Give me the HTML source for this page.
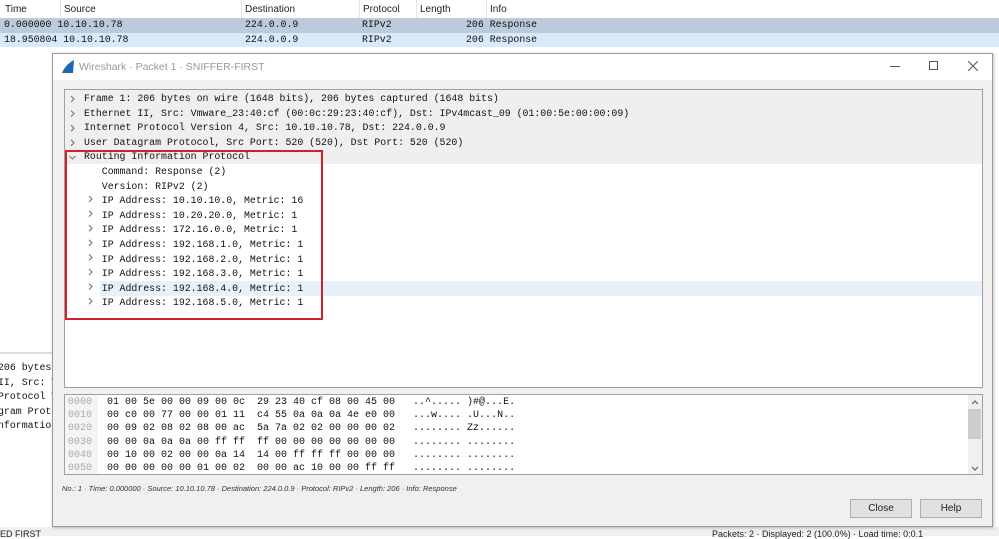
<!DOCTYPE html>
<html><head><style>
*{margin:0;padding:0;box-sizing:border-box}
body{width:999px;height:536px;overflow:hidden;background:#fff;position:relative;font-family:"Liberation Sans",sans-serif}
.a{position:absolute;white-space:pre}
.m{font-family:"Liberation Mono",monospace;font-size:9.9px;color:#111}
.s{font-size:10px;color:#222}
</style></head><body>
<div class="a" style="left:0;top:0;width:999px;height:18px;background:#fff"></div>
<div class="a s" style="left:5px;top:4px">Time</div>
<div class="a" style="left:60px;top:0;width:1px;height:18px;background:#e5e5e5"></div>
<div class="a s" style="left:64px;top:4px">Source</div>
<div class="a" style="left:241px;top:0;width:1px;height:18px;background:#e5e5e5"></div>
<div class="a s" style="left:245px;top:4px">Destination</div>
<div class="a" style="left:359px;top:0;width:1px;height:18px;background:#e5e5e5"></div>
<div class="a s" style="left:363px;top:4px">Protocol</div>
<div class="a" style="left:416px;top:0;width:1px;height:18px;background:#e5e5e5"></div>
<div class="a s" style="left:420px;top:4px">Length</div>
<div class="a" style="left:486px;top:0;width:1px;height:18px;background:#e5e5e5"></div>
<div class="a s" style="left:490px;top:4px">Info</div>
<div class="a" style="left:0;top:18px;width:999px;height:15px;background:#bccbdb"></div>
<div class="a" style="left:0;top:33px;width:999px;height:14px;background:#d8eaf9"></div>
<div class="a m" style="left:4px;top:19px">0.000000 10.10.10.78</div>
<div class="a m" style="left:245px;top:19px">224.0.0.9</div>
<div class="a m" style="left:362px;top:19px">RIPv2</div>
<div class="a m" style="left:466px;top:19px">206 Response</div>
<div class="a m" style="left:4px;top:34px">18.950804 10.10.10.78</div>
<div class="a m" style="left:245px;top:34px">224.0.0.9</div>
<div class="a m" style="left:362px;top:34px">RIPv2</div>
<div class="a m" style="left:466px;top:34px">206 Response</div>
<div class="a" style="left:0;top:352px;width:53px;height:2px;background:#ddd"></div>
<div class="a m" style="left:-2px;top:361px;line-height:14.6px">206 bytes
II, Src: V
Protocol V
gram Proto
nformation</div>
<div class="a" style="left:0;top:527px;width:999px;height:9px;background:#f0f0f0"></div>
<div class="a s" style="left:0;top:529px;font-size:9px">ED FIRST</div>
<div class="a s" style="left:712px;top:529px;font-size:9px">Packets: 2 · Displayed: 2 (100.0%) · Load time: 0:0.1</div>
<div class="a" style="left:52px;top:53px;width:941px;height:474px;background:#f0f0f0;border:1px solid #9a9a9a;box-shadow:1px 1px 3px rgba(0,0,0,.25)"></div>
<div class="a" style="left:53px;top:54px;width:939px;height:26px;background:#fff"></div>
<svg class="a" style="left:61px;top:60px" width="14" height="13"><path d="M1 13 C3 8 7 3 13 0 L12 13 Z" fill="#1f67b5"/></svg>
<div class="a" style="left:79px;top:61px;font-size:10.5px;color:#999">Wireshark · Packet 1 · SNIFFER-FIRST</div>
<div class="a" style="left:890px;top:66px;width:10px;height:1px;background:#555"></div>
<div class="a" style="left:929px;top:61px;width:9px;height:9px;border:1px solid #555"></div>
<svg class="a" style="left:968px;top:61px" width="10" height="10"><path d="M0 0L10 10M10 0L0 10" stroke="#555" stroke-width="1"/></svg>
<div class="a" style="left:64px;top:89px;width:919px;height:299px;background:#fff;border:1px solid #a0a0a0"></div>
<div class="a" style="left:65px;top:90px;width:917px;height:74px;background:#efefef"></div>
<div class="a" style="left:100px;top:281px;width:882px;height:15px;background:#e6f1fb"></div>
<div class="a m" style="left:84px;top:92px;line-height:14.6px">Frame 1: 206 bytes on wire (1648 bits), 206 bytes captured (1648 bits)
Ethernet II, Src: Vmware_23:40:cf (00:0c:29:23:40:cf), Dst: IPv4mcast_09 (01:00:5e:00:00:09)
Internet Protocol Version 4, Src: 10.10.10.78, Dst: 224.0.0.9
User Datagram Protocol, Src Port: 520 (520), Dst Port: 520 (520)
Routing Information Protocol
   Command: Response (2)
   Version: RIPv2 (2)
   IP Address: 10.10.10.0, Metric: 16
   IP Address: 10.20.20.0, Metric: 1
   IP Address: 172.16.0.0, Metric: 1
   IP Address: 192.168.1.0, Metric: 1
   IP Address: 192.168.2.0, Metric: 1
   IP Address: 192.168.3.0, Metric: 1
   IP Address: 192.168.4.0, Metric: 1
   IP Address: 192.168.5.0, Metric: 1</div>
<svg class="a" style="left:68px;top:94px" width="10" height="70"><path d="M3 2L6 5L3 8M3 16.6L6 19.6L3 22.6M3 31.2L6 34.2L3 37.2M3 45.8L6 48.8L3 51.8M1.5 62L4.5 65L7.5 62" fill="none" stroke="#777" stroke-width="1.1"/></svg>
<svg class="a" style="left:86px;top:196px" width="10" height="112"><path d="M3 0L6 3L3 6M3 14.6L6 17.6L3 20.6M3 29.2L6 32.2L3 35.2M3 43.8L6 46.8L3 49.8M3 58.4L6 61.4L3 64.4M3 73L6 76L3 79M3 87.6L6 90.6L3 93.6M3 102.2L6 105.2L3 108.2" fill="none" stroke="#777" stroke-width="1.1"/></svg>
<div class="a" style="left:65px;top:150px;width:258px;height:170px;border:2px solid #d0202a"></div>
<div class="a" style="left:64px;top:394px;width:919px;height:81px;background:#fff;border:1px solid #a0a0a0"></div>
<div class="a" style="left:65px;top:395px;width:33px;height:79px;background:#f4f4f4"></div>
<div class="a m" style="left:68px;top:396px;line-height:13.2px;color:#aaa;font-size:10px">0000
0010
0020
0030
0040
0050</div>
<div class="a m" style="left:107px;top:396px;line-height:13.2px;font-size:10px">01 00 5e 00 00 09 00 0c  29 23 40 cf 08 00 45 00   ..^..... )#@...E.
00 c0 00 77 00 00 01 11  c4 55 0a 0a 0a 4e e0 00   ...w.... .U...N..
00 09 02 08 02 08 00 ac  5a 7a 02 02 00 00 00 02   ........ Zz......
00 00 0a 0a 0a 00 ff ff  ff 00 00 00 00 00 00 00   ........ ........
00 10 00 02 00 00 0a 14  14 00 ff ff ff 00 00 00   ........ ........
00 00 00 00 00 01 00 02  00 00 ac 10 00 00 ff ff   ........ ........</div>
<div class="a" style="left:968px;top:395px;width:14px;height:79px;background:#f0f0f0"></div>
<div class="a" style="left:968px;top:409px;width:13px;height:30px;background:#cdcdcd"></div>
<svg class="a" style="left:970px;top:398px" width="10" height="76"><path d="M2 6L5 3L8 6M2 69L5 72L8 69" fill="none" stroke="#555" stroke-width="1.1"/></svg>
<div class="a" style="left:62px;top:484px;font-size:7.5px;font-style:italic;color:#333">No.: 1 · Time: 0.000000 · Source: 10.10.10.78 · Destination: 224.0.0.9 · Protocol: RIPv2 · Length: 206 · Info: Response</div>
<div class="a" style="left:850px;top:499px;width:62px;height:19px;background:#e1e1e1;border:1px solid #adadad;font-size:10px;text-align:center;line-height:17px;color:#222">Close</div>
<div class="a" style="left:920px;top:499px;width:62px;height:19px;background:#e1e1e1;border:1px solid #adadad;font-size:10px;text-align:center;line-height:17px;color:#222">Help</div>
</body></html>
